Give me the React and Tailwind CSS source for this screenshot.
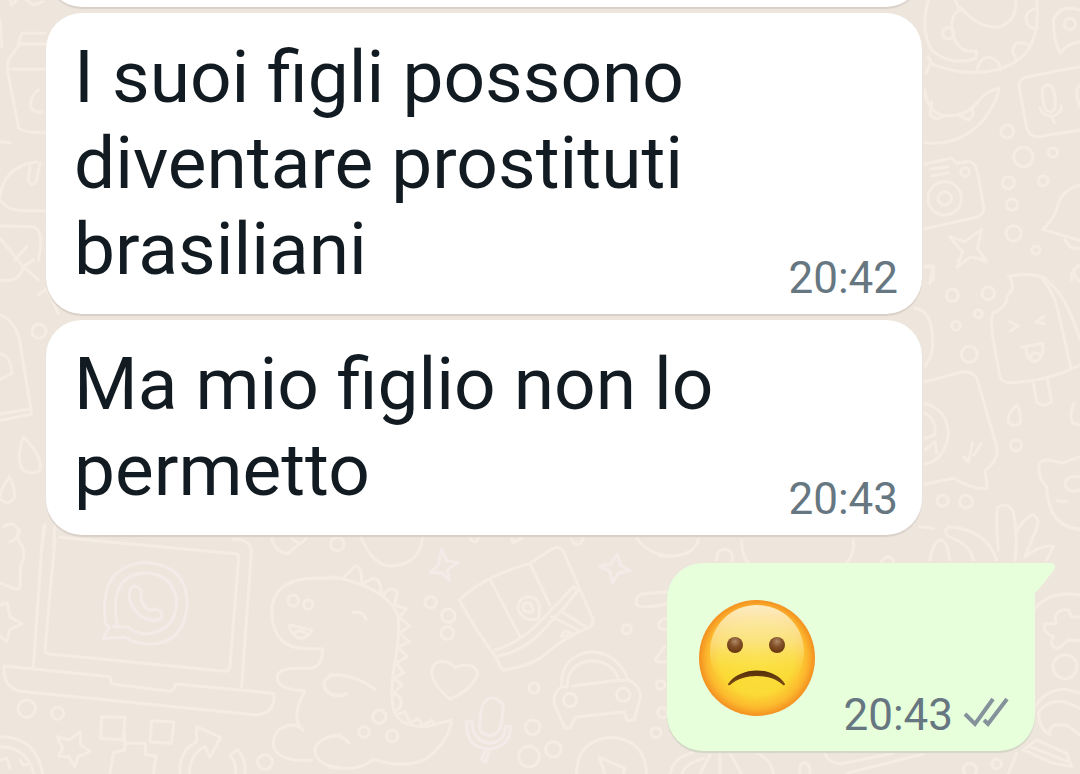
import clsx from 'clsx';

const messages = [
  { id: 1, text: 'I suoi figli possono diventare prostituti brasiliani', time: '20:42' },
  { id: 2, text: 'Ma mio figlio non lo permetto', time: '20:43' },
];

// Groups are drawn on a 3x grid and scaled down
function Wallpaper() {
  return (
    <svg
      className="absolute inset-0 h-full w-full"
      viewBox="0 0 1080 774"
      preserveAspectRatio="xMinYMin slice"
      fill="none"
      stroke="#f5ede4"
      strokeWidth="9"
      strokeLinecap="round"
      strokeLinejoin="round"
      aria-hidden="true"
    >
      {/* laptop, puzzle, arrow */}
      <g transform="translate(0 530) scale(.3333)">
        <path d="M130 -10 L100 410 M165 25 L135 360 Q135 370 150 372 L675 424 Q688 422 690 410 L716 82 Q716 72 705 71 L180 22 M700 28 Q756 28 754 70 L725 470" />
        <path d="M12 408 L330 440 L335 462 L510 484 Q525 480 526 462 L822 490 Q826 550 770 555 L60 484 Q8 470 12 408Z" />
        <g stroke="#f4ebe8">
          <path d="M318 285 Q290 110 435 97 Q560 105 562 220 Q555 345 440 342 Q405 340 375 322 L310 325 L328 290Z" />
          <path d="M352 285 Q325 140 430 128 Q525 130 530 220 Q525 305 435 312 Q405 308 385 292 L340 290" />
          <path d="M388 190 Q392 165 405 168 Q428 175 424 192 Q415 208 440 236 Q450 244 465 236 Q490 245 485 262 Q465 280 430 262 Q385 230 388 190Z" />
        </g>
        <path d="M60 0 Q45 30 65 45 Q80 80 62 105 L60 172 Q55 180 40 175 L0 158 M0 225 L22 218 L30 260 L66 282 L30 298 L20 335 L0 318" />
        <circle cx="80" cy="536" r="26" />
        <circle cx="173" cy="550" r="18" />
        <path d="M172 620 L208 630 L240 605 L242 645 L270 665 L235 680 L225 710 L205 680 L175 678 L188 655Z" />
        <path d="M305 560 L375 562 L370 630 L302 625Z M455 572 L522 576 L514 640 L450 636Z M374 605 L374 660 L340 668 L330 732 M374 640 L436 640 L436 674 L468 678 L460 732" />
        <path d="M540 732 Q535 665 590 635 L590 590 L662 622 L630 682 L615 650 Q570 670 568 732 M706 732 Q712 700 690 676 L712 658 Q740 690 735 732" />
        <path d="M0 620 Q110 620 128 732 M0 650 Q80 650 102 732 M0 690 L20 685 L30 715 M60 690 L70 705 L90 700" />
        <circle cx="795" cy="696" r="22" />
        {/* dinosaur */}
        <path d="M1020 145 H950 Q815 145 815 250 Q820 355 920 356 H968 Q968 410 930 415 H890 Q830 415 832 445 Q835 480 915 482 Q870 560 908 600 Q880 570 835 600 Q795 660 860 685 Q900 695 935 690 M1020 435 Q970 435 972 468 Q980 495 1020 496 M1020 615 Q940 625 945 670 Q960 710 1020 712" />
        <circle cx="880" cy="212" r="16" />
        <circle cx="925" cy="224" r="14" />
        <path d="M868 285 L935 300 Q925 325 900 325 Q870 315 868 285Z M884 308 Q900 295 920 312" />
        <path d="M815 25 Q825 65 862 72 L920 25 M875 25 L895 40" />
      </g>
      {/* dinosaur back, envelope, heart, car */}
      <g transform="translate(330 530) scale(.3333)">
        <path d="M0 140 Q160 165 202 250 Q212 290 198 380 Q175 500 195 550 Q215 590 290 590 L365 570 Q360 620 310 670 Q250 725 130 688 Q90 725 0 712" />
        <path d="M42 142 L75 108 Q95 105 95 155 M98 160 L130 145 Q155 150 152 185 M160 195 Q180 165 202 185 L195 222 M200 228 L228 236 L208 262 L240 288 L208 310 L238 335 L205 352 L232 380 L198 400 L222 428 L192 445 L216 465 L190 490 Q220 500 212 530 L195 545 M200 555 L225 545 L240 580 L265 565 L280 588 L305 570 L312 585" />
        <path d="M70 248 Q95 240 108 268 M0 435 Q70 430 135 478 M0 492 Q30 505 50 490 M0 618 Q40 615 58 640" />
        <circle cx="148" cy="560" r="20" />
        <circle cx="102" cy="606" r="16" />
        <circle cx="187" cy="618" r="17" />
        <circle cx="22" cy="42" r="20" />
        <path d="M92 20 Q130 110 185 108 Q270 105 278 20" />
        <g stroke="#f4ebe8">
          <path d="M335 58 L350 92 L382 98 L352 120 L358 150 L335 128 L302 128 L325 105Z" />
          <path d="M862 72 L872 105 L900 122 L868 128 L848 158 L840 125 L808 108 L842 102Z" />
        </g>
        <circle cx="302" cy="217" r="17" />
        <circle cx="355" cy="257" r="20" />
        <circle cx="352" cy="309" r="19" />
        <path d="M388 210 Q460 140 600 100 L670 55 Q695 45 705 75 L790 270 Q790 290 770 295 Q690 330 640 378 Q590 412 518 420 Q505 400 495 378 Q430 290 388 210Z" />
        <path d="M480 148 L570 320 M602 105 L660 225 M495 360 Q570 340 640 265 L730 170 L745 182 Q680 260 620 320 Q570 365 505 378 M740 185 L695 245 L775 295 M665 260 L745 300 M695 320 Q700 290 730 315Z" />
        <path d="M625 265 Q640 205 595 200 Q560 205 565 240 Q580 275 620 268 M605 245 Q575 250 580 225 Q600 205 610 240" />
        <path d="M360 508 Q305 460 305 425 Q310 390 345 395 Q370 400 375 415 Q395 400 425 408 Q450 420 438 445 Q415 485 360 508Z" />
        <g stroke="#f4ebe8">
          <path d="M455 535 Q465 500 492 505 Q520 512 520 535 L512 590 Q500 620 475 615 Q445 610 448 585Z M410 575 Q405 655 480 658 Q540 650 542 590 L526 590 Q525 635 480 640 Q428 635 426 575Z M465 662 L455 690 L468 696 L476 662" />
        </g>
        <path d="M695 470 Q690 380 780 365 Q860 365 895 450 Q930 465 932 500 Q925 525 912 570 L892 572 L882 545 L735 562 L722 592 L705 595 L685 550 Q655 500 695 470 L712 470 Q710 400 785 392 Q845 392 868 450 L728 468 M868 452 L895 450" />
        <circle cx="720" cy="510" r="20" />
        <circle cx="880" cy="494" r="20" />
        <circle cx="612" cy="474" r="15" />
        <circle cx="890" cy="298" r="14" />
        <circle cx="992" cy="465" r="13" />
        <circle cx="998" cy="548" r="15" />
        <circle cx="978" cy="608" r="15" />
        <circle cx="608" cy="592" r="22" />
        <circle cx="670" cy="658" r="23" />
        <circle cx="597" cy="680" r="31" />
        <path d="M740 732 Q740 630 845 622 Q945 630 950 732 M825 732 L808 682 L885 715 L880 732" />
        <path d="M1010 185 L935 192 Q910 205 922 225 Q935 238 1010 222 M920 25 Q960 75 1020 78 M1010 265 Q980 270 988 295 L1010 300 M1005 350 L978 385 Q975 400 1010 395" />
        <path d="M420 25 Q432 45 445 25 M545 25 L550 38 L575 25 M725 30 Q745 60 760 25" />
      </g>
      {/* around the last bubble */}
      <g transform="translate(660 540) scale(.3333)">
        <path d="M0 48 Q100 55 115 0 M170 60 Q170 28 195 28 Q220 30 218 62 M245 0 Q245 50 265 68 M560 68 Q585 40 580 0 M665 65 Q685 35 702 65" />
        <path d="M30 702 Q40 650 100 638 M340 702 Q335 660 290 638 M65 702 Q75 670 130 655 M180 640 V702 M150 645 L120 702 M210 640 L245 702 M420 702 Q415 668 435 668 Q452 670 450 702 M495 640 Q500 665 540 672 L700 640 M560 700 L790 642" />
        <circle cx="1010" cy="672" r="14" />
        <circle cx="930" cy="690" r="20" />
      </g>
      {/* flower, shell */}
      <g transform="translate(1000 500) scale(.3333)">
        <path d="M145 0 Q160 80 240 88" />
        <path d="M105 325 Q150 270 240 285" />
        <path d="M165 348 Q175 325 205 330 L215 350 L240 352 M165 348 L168 370 L135 372 Q125 395 160 410 Q145 440 175 445 L205 420 L240 422" />
        <circle cx="195" cy="500" r="36" />
        <path d="M105 620 Q140 565 200 568 L240 580 M115 640 Q135 600 195 605 L240 625 M115 640 Q120 690 150 705 M240 705 L200 675 L160 675 Q145 690 150 705" />
        <path d="M70 750 L110 720 L200 760 L215 800 L160 790Z M90 740 L205 785 M50 760 L25 822" />
      </g>
      {/* right column, top */}
      <g transform="translate(900 0) scale(.3333)">
        <path d="M85 0 Q60 90 95 150 Q150 200 228 175 L230 152 Q165 165 155 80 Q155 40 180 30 L165 0 M180 20 Q230 80 290 82 Q350 70 348 0 M410 0 Q425 140 340 190 Q230 245 90 190 L78 220 M85 170 L95 190" />
        <circle cx="145" cy="100" r="17" />
        <path d="M410 25 Q370 35 380 65 Q390 90 412 85 M385 135 Q340 115 338 155 L350 180 M232 215 Q235 172 270 172 Q300 180 302 210" />
        <path d="M540 30 Q480 10 460 60 Q460 120 480 160 Q500 130 540 125" />
        <circle cx="510" cy="72" r="17" />
        <path d="M540 200 L375 232 Q355 240 358 265 L380 385 Q390 412 415 410 L540 390 M428 265 Q440 248 455 258 Q470 290 465 325 Q450 345 435 325 Q425 295 428 265Z M420 325 Q430 352 460 348 Q485 340 484 318 M455 350 L464 368 M540 255 Q520 270 540 320" />
        <path d="M75 270 Q80 340 140 348 Q195 350 230 310 Q260 270 298 265 Q290 310 250 360 Q180 440 75 428 M95 305 L90 345 L110 358 L135 345 M180 348 L205 360 L220 345 L215 320" />
        <circle cx="322" cy="395" r="19" />
        <circle cx="370" cy="471" r="29" />
        <circle cx="459" cy="457" r="14" />
        <circle cx="325" cy="548" r="18" />
        <circle cx="429" cy="543" r="15" />
        <circle cx="336" cy="614" r="17" />
        <circle cx="341" cy="700" r="23" />
        <circle cx="408" cy="750" r="12" />
        <path d="M75 492 L155 474 L170 490 L210 484 Q230 490 235 530 L252 625 Q250 645 230 652 L75 686 M92 508 L145 500 M95 528 L148 518" />
        <circle cx="134" cy="595" r="50" />
        <circle cx="134" cy="595" r="20" />
        <circle cx="195" cy="516" r="13" />
        <path d="M148 710 L195 725 L245 688 L232 745 L260 782 L212 770 L172 802 L188 755Z" />
        <path d="M540 555 Q480 570 470 630 Q455 665 428 688 L540 722 M495 718 Q505 750 540 745 M75 800 H100 V840 M325 830 Q380 815 440 835 M540 795 Q510 810 515 840" />
      </g>
      {/* right column, ice cream, bag and cat */}
      <g transform="translate(900 260) scale(.3333)">
        <path d="M328 50 Q410 30 450 70 Q500 110 540 240 M328 50 Q350 85 322 105 Q320 145 280 158 Q270 180 280 240 L300 350 Q305 368 330 368 Q440 365 540 315 M430 60 Q470 110 480 180 L512 320 M400 368 L410 425 Q430 445 455 425 L442 355" />
        <path d="M330 185 L355 198 L332 212 M430 170 L408 185 L432 192 M365 262 L430 250 M378 265 Q380 305 408 305 Q435 290 428 252 M392 290 Q400 270 422 285" />
        <circle cx="157" cy="106" r="18" />
        <circle cx="265" cy="100" r="19" />
        <circle cx="235" cy="161" r="12" />
        <circle cx="168" cy="197" r="13" />
        <circle cx="208" cy="283" r="24" />
        <path d="M45 145 Q95 150 98 240 Q100 290 75 318 M75 365 L190 335 Q230 335 235 370 L290 560 Q298 600 255 632 L262 685 Q220 690 160 655 L75 672 M75 430 Q145 450 145 525 Q135 600 75 612 M75 460 Q108 475 105 525 L75 535 M75 570 L105 545 L110 580 M190 590 L205 606 L218 548 M222 585 L243 552" />
        <path d="M352 435 Q320 460 325 485 Q340 505 360 490 Q365 460 352 435Z M522 430 Q505 470 520 490 L540 495 M540 15 Q505 35 540 65 M100 20 L90 70 M75 18 H100 M175 0 L180 15 M245 0 L258 5" />
        <circle cx="348" cy="556" r="17" />
        <circle cx="128" cy="722" r="17" />
        <circle cx="198" cy="725" r="19" />
        <path d="M540 590 L485 610 Q430 590 418 610 Q412 655 440 680 Q445 800 540 808 M540 650 Q495 645 495 675 Q505 700 540 690 M472 722 L500 725" />
        <path d="M295 870 Q285 755 295 740 Q325 725 340 755 Q355 830 345 900 M345 820 Q380 765 400 765 Q420 775 410 805 L375 890 M375 890 Q430 850 460 860 L440 900 M290 900 Q260 810 150 800 Q125 810 145 830 Q210 850 220 900 M90 900 Q100 840 125 840 Q145 850 148 900 M60 800 L100 805" />
      </g>
      {/* left column */}
      <g transform="translate(0 0) scale(.3333)">
        <path d="M135 100 H65 L55 130 M135 132 H60 L25 180 L22 210 L55 380 Q60 398 135 398 M25 208 H135 M115 270 Q90 285 92 320 Q100 340 125 335" />
        <path d="M0 590 Q10 500 110 485 M0 600 Q20 632 70 632 H135 M90 500 L85 540 Q95 565 108 545 L120 490 M0 425 L30 428 M0 60 L5 140 M30 0 L35 15 L50 0 M80 0 L100 15 L130 5" />
        <path d="M0 678 L100 680 Q125 690 122 740 L115 780 M45 780 L80 740 M0 715 L70 800" />
      </g>
      <g transform="translate(0 260) scale(.3333)">
        <path d="M0 60 Q60 70 70 20 L115 60 M70 20 L100 0 M115 105 L140 85 L175 160 M0 165 Q50 185 60 250 L95 462 L0 482 M0 462 L85 448 M0 280 Q35 290 35 340 L0 358" />
        <circle cx="117" cy="214" r="21" />
        <path d="M70 530 Q48 590 65 625 Q90 650 120 630 Q130 590 70 530Z M28 650 Q0 690 0 715 Q20 740 42 715 Q48 690 28 650Z M10 800 Q40 780 55 810 Q55 840 30 845 M135 795 L125 870 M165 800 L160 860" />
      </g>
    </svg>
  );
}

function SadFace() {
  return (
    <svg className="mb-[22px] size-[118px] shrink-0" viewBox="0 0 118 118" role="img" aria-label="Faccina triste">
      <defs>
        <radialGradient id="face" cx="50%" cy="50%" r="51%">
          <stop offset="0" stopColor="#fbe13d" />
          <stop offset=".62" stopColor="#fbda35" />
          <stop offset=".84" stopColor="#fcb92e" />
          <stop offset="1" stopColor="#f28a1e" />
        </radialGradient>
        <linearGradient id="shine" x1="0" y1="0" x2="0" y2="1">
          <stop offset="0" stopColor="#fdeecb" stopOpacity=".95" />
          <stop offset=".4" stopColor="#fbe596" stopOpacity=".7" />
          <stop offset=".8" stopColor="#fbe13d" stopOpacity="0" />
        </linearGradient>
        <radialGradient id="eye" cx="50%" cy="28%" r="68%">
          <stop offset="0" stopColor="#b08a66" />
          <stop offset=".5" stopColor="#81502a" />
          <stop offset="1" stopColor="#69390f" />
        </radialGradient>
        <linearGradient id="mouth" x1="0" y1="0" x2="0" y2="1">
          <stop offset="0" stopColor="#55300b" />
          <stop offset="1" stopColor="#7a4a14" />
        </linearGradient>
      </defs>
      <circle cx="59" cy="59" r="58" fill="url(#face)" />
      <circle cx="59" cy="53" r="47" fill="url(#shine)" />
      <circle cx="37" cy="46" r="8" fill="url(#eye)" />
      <circle cx="79" cy="46" r="8" fill="url(#eye)" />
      <path d="M30 85 C42 67 76 67 87 85 Q87 87 85 86 C73 74 45 74 32 86 Q30 87 30 85Z" fill="url(#mouth)" />
    </svg>
  );
}

function Ticks() {
  return (
    <svg className="mb-[10px] h-8 w-[46px]" viewBox="0 0 46 32" fill="none" stroke="#85929c" strokeWidth="4" role="img" aria-label="Consegnato">
      <path d="M2 17 L12 27 L30 2" />
      <path d="M21 23 L25 27 L44 2" />
    </svg>
  );
}

function Time({ value }) {
  return <time className="shrink-0 text-[44px] leading-[48px] text-[#667781]">{value}</time>;
}

export default function App() {
  return (
    <main className="relative flex min-h-screen flex-col overflow-hidden bg-[#eee6dd] pr-[45px] pb-[23px] pl-[46px] font-[Roboto,sans-serif]">
      <Wallpaper />

      {/* end of the previous message */}
      <div className="relative -mt-[73px] mr-[113px] h-20 rounded-[36px] bg-white shadow-[0_2px_1px_#d8d0c8]" />

      {messages.map((m, i) => (
        <article
          key={m.id}
          className={clsx(
            'relative mt-[6px] mr-[113px] flex items-end justify-between rounded-[36px] bg-white pt-[21px] pr-6 pb-3 pl-7 shadow-[0_2px_1px_#d8d0c8]',
            i === messages.length - 1 && 'mb-7'
          )}
        >
          <p className="pb-[10px] text-[73px] leading-[86px] text-[#111b21]">{m.text}</p>
          <Time value={m.time} />
        </article>
      ))}

      <article className="relative flex items-end self-end rounded-[36px] rounded-tr-none bg-[#e7ffdb] pt-9 pr-[26px] pb-3 pl-[31px] shadow-[0_2px_1px_#d3d5c5]">
        <svg className="absolute top-0 left-full h-[30px] w-5" viewBox="0 0 20 30" aria-hidden="true">
          <path d="M-1 0 H16 Q22 1 19 7 L3 27 Q0 29 0 30 H-1Z" fill="#e7ffdb" />
        </svg>
        <SadFace />
        <div className="ml-[27px] flex items-end gap-[10px]">
          <Time value="20:43" />
          <Ticks />
        </div>
      </article>
    </main>
  );
}
